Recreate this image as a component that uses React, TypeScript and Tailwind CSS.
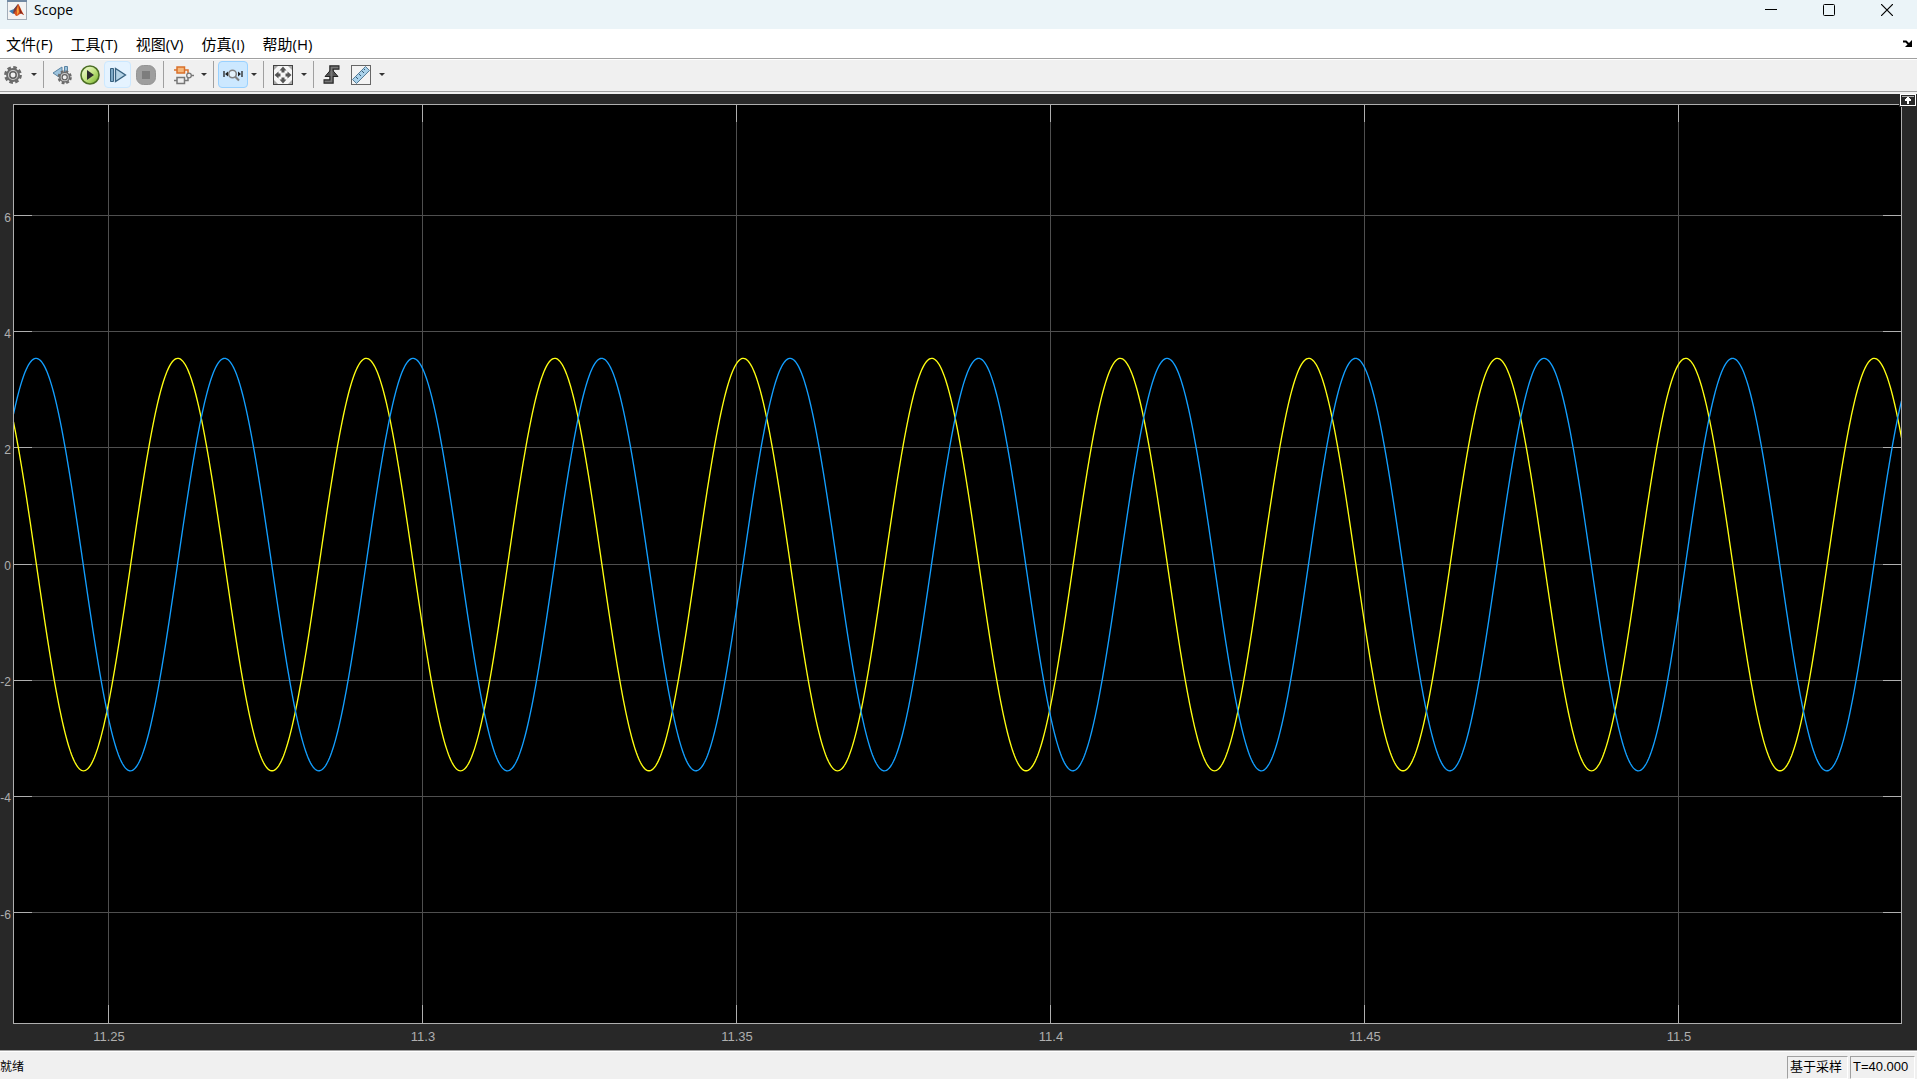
import { useLayoutEffect, useRef, useState, type ReactNode } from 'react';

const MENUS = ['文件(F)', '工具(T)', '视图(V)', '仿真(I)', '帮助(H)'];

const X_MIN = 11.23487;
const X_MAX = 11.53551;
const Y_MAX = 7.92;
const Y_MIN = -7.9;
const X_TICKS = [11.25, 11.3, 11.35, 11.4, 11.45, 11.5];
const Y_TICKS = [6, 4, 2, 0, -2, -4, -6];
const PERIOD = 0.030016;
const AMPLITUDE = 3.55;
const TRACES = [
  { name: 'a', color: '#ffff11', peak: 11.26103 },
  { name: 'b', color: '#139fff', peak: 11.23847 },
];

const MARGIN = { left: 13, right: 15, top: 10, bottom: 26 };
const TICK = 18;

function Scope(): JSX.Element {
  const ref = useRef<HTMLDivElement>(null);
  const [size, setSize] = useState({ width: 0, height: 0 });

  useLayoutEffect(() => {
    const el = ref.current;
    if (!el) return;
    const measure = () => setSize({ width: el.clientWidth, height: el.clientHeight });
    measure();
    const observer = new ResizeObserver(measure);
    observer.observe(el);
    return () => observer.disconnect();
  }, []);

  const left = MARGIN.left;
  const right = size.width - MARGIN.right - 1;
  const top = MARGIN.top;
  const bottom = size.height - MARGIN.bottom - 1;
  const sx = (v: number) => left + ((v - X_MIN) / (X_MAX - X_MIN)) * (right - left);
  const sy = (v: number) => top + ((Y_MAX - v) / (Y_MAX - Y_MIN)) * (bottom - top);

  const tracePath = (peak: number) => {
    const points: string[] = [];
    for (let px = left; px <= right; px += 1) {
      const t = X_MIN + ((px - left) / (right - left)) * (X_MAX - X_MIN);
      const v = AMPLITUDE * Math.cos((2 * Math.PI * (t - peak)) / PERIOD);
      points.push(`${px + 0.5},${(sy(v) + 0.5).toFixed(2)}`);
    }
    return points.join(' ');
  };

  return (
    <main ref={ref} className="relative min-h-0 flex-1 overflow-hidden bg-[#282828]">
      {size.width > 0 && (
        <svg width={size.width} height={size.height} className="absolute inset-0 block" role="img" aria-label="Scope">
          <rect x={left} y={top} width={right - left} height={bottom - top} fill="#000" />
          <g shapeRendering="crispEdges" fill="none">
            {X_TICKS.map((v) => {
              const x = Math.round(sx(v)) + 0.5;
              return (
                <g key={v}>
                  <path d={`M${x} ${top}V${bottom}`} stroke="#4f4f4f" />
                  <path d={`M${x} ${top}v${TICK}M${x} ${bottom}v${-TICK}`} stroke="#afafaf" />
                </g>
              );
            })}
            {Y_TICKS.map((v) => {
              const y = Math.floor(sy(v)) + 0.5;
              return (
                <g key={v}>
                  <path d={`M${left} ${y}H${right}`} stroke="#4f4f4f" />
                  <path d={`M${left} ${y}h${TICK + 1}M${right} ${y}h${-TICK}`} stroke="#afafaf" />
                </g>
              );
            })}
          </g>
          {TRACES.map((t) => (
            <polyline key={t.name} points={tracePath(t.peak)} fill="none" stroke={t.color} strokeWidth="1.35" />
          ))}
          <rect
            x={left + 0.5}
            y={top + 0.5}
            width={right - left}
            height={bottom - top}
            fill="none"
            stroke="#afafaf"
            shapeRendering="crispEdges"
          />
          <g fill="#afafaf" fontFamily="'Liberation Sans', Arial, sans-serif">
            {X_TICKS.map((v) => (
              <text key={v} x={sx(v) + 1} y={bottom + 18} fontSize="13" textAnchor="middle">
                {v}
              </text>
            ))}
            {Y_TICKS.map((v) => (
              <text key={v} x={left - 2} y={sy(v) + 6} fontSize="12" textAnchor="end">
                {v}
              </text>
            ))}
          </g>
        </svg>
      )}
      <button type="button" aria-label="Maximize axes" className="absolute top-0 right-0 block">
        <svg width="18" height="13" viewBox="0 0 18 13" shapeRendering="crispEdges">
          <rect width="18" height="13" fill="#282828" />
          <rect x="1.5" y="0.5" width="15" height="11" fill="#282828" stroke="#fff" />
          <path d="M3 2h12v1H3z" fill="#afafaf" />
          <path d="M8 3h2v1h1v1h1v2h-2v3H8V7H6V5h1V4h1z" fill="#fff" />
        </svg>
      </button>
    </main>
  );
}

function MatlabLogo(): JSX.Element {
  return (
    <svg width="20" height="20" viewBox="0 0 20 20">
      <rect x="0.5" y="0.5" width="19" height="19" fill="#f3f3f3" stroke="#a3adb8" />
      <path d="M0 0h20v2H0z" fill="#7189a3" />
      <path d="M2 11l5-2 4-5-3 9-2 1z" fill="#3b7fb5" />
      <path d="M7 9l4-5 1 1-4 9-2-1z" fill="#7a3b3a" />
      <path d="M11 4c2 2 4 8 6 11-2-1-3-2-4-1-2 1-2 2-4 2L7 13c2-1 3-6 4-9z" fill="#d9531e" />
      <path d="M12 5c1 3 2 7 5 10-2-1-3-2-4-1z" fill="#8e2517" />
      <path d="M10 9l1-3 1 6-2 3z" fill="#f5a13a" />
    </svg>
  );
}

function GearIcon({ x = 0, y = 0, scale = 1 }: { x?: number; y?: number; scale?: number }): JSX.Element {
  return (
    <g transform={`translate(${x} ${y}) scale(${scale})`}>
      <circle cx="9" cy="9" r="7.6" fill="none" stroke="#6b6b6b" strokeWidth="2.6" strokeDasharray="3.6 2.37" />
      <circle cx="9" cy="9" r="6" fill="#cdcdcd" stroke="#6b6b6b" strokeWidth="1.8" />
      <circle cx="9" cy="9" r="3.2" fill="#efefef" stroke="#5f5f5f" strokeWidth="1.5" />
    </g>
  );
}

function Settings(): JSX.Element {
  return (
    <svg width="18" height="18" viewBox="0 0 18 18">
      <GearIcon />
    </svg>
  );
}

function StepBack(): JSX.Element {
  return (
    <svg width="20" height="20" viewBox="0 0 20 20">
      <path d="M10 2v12L1 8z" fill="#9cc3dd" stroke="#5b84a3" />
      <path d="M12.500 1.500h3v11h-3z" fill="#9cc3dd" stroke="#5b84a3" />
      <GearIcon x={5.5} y={5} scale={0.8} />
    </svg>
  );
}

function Run(): JSX.Element {
  return (
    <svg width="20" height="20" viewBox="0 0 20 20">
      <defs>
        <linearGradient id="run" x1="0" y1="0" x2="1" y2="1">
          <stop offset="0" stopColor="#f8fde4" />
          <stop offset="0.5" stopColor="#c5e585" />
          <stop offset="1" stopColor="#6fae22" />
        </linearGradient>
      </defs>
      <circle cx="10" cy="10" r="9" fill="url(#run)" stroke="#4c6f25" strokeWidth="1.6" />
      <path d="M7 5v10l7-5z" fill="#2c2c2c" />
    </svg>
  );
}

function StepForward(): JSX.Element {
  return (
    <svg width="18" height="18" viewBox="0 0 18 18">
      <path d="M1.500 2.500h3v13h-3z" fill="#7fa9c6" stroke="#38617f" />
      <path d="M6.500 2.500v13l10-6.500z" fill="#b5d3e6" stroke="#38617f" strokeWidth="1.300" />
    </svg>
  );
}

function Stop(): JSX.Element {
  return (
    <svg width="20" height="20" viewBox="0 0 20 20">
      <rect x="0.500" y="0.500" width="19" height="19" rx="7" fill="#9e9e9e" stroke="#949494" />
      <path d="M6 6h8v8H6z" fill="#7d7d7d" />
    </svg>
  );
}

function Blocks(): JSX.Element {
  return (
    <svg width="20" height="20" viewBox="0 0 20 20" fill="none">
      <path d="M0 5h3M10 5h4v4" stroke="#d9702a" strokeWidth="1.500" />
      <path d="M0 15.500h3M10 15.500h4v-4M17 10.500h3" stroke="#777" strokeWidth="1.500" />
      <path d="M3 2h7.500v6H3z" fill="#f6b87c" stroke="#d9702a" strokeWidth="1.500" />
      <path d="M3 12.500h7.500v6H3z" fill="#eee" stroke="#777" strokeWidth="1.500" />
      <circle cx="15" cy="10.500" r="2.300" fill="#eee" stroke="#777" strokeWidth="1.300" />
    </svg>
  );
}

function ZoomX(): JSX.Element {
  return (
    <svg width="20" height="16" viewBox="0 0 20 16">
      <path d="M1 4v6M19 4v6" stroke="#222" strokeWidth="1.300" />
      <path d="M2 7l3-2.500v5zM18 7l-3-2.500v5z" fill="#222" />
      <path d="M12 9.500l4 4" stroke="#808080" strokeWidth="2.200" />
      <circle cx="9.500" cy="7" r="3.800" fill="#e4f1fa" stroke="#808080" strokeWidth="1.500" />
    </svg>
  );
}

function FitView(): JSX.Element {
  return (
    <svg width="20" height="20" viewBox="0 0 20 20">
      <rect x="0.500" y="0.500" width="19" height="19" fill="#f6f6f6" stroke="#444" />
      <path d="M1 1h4L1 5zM19 1h-4l4 4zM1 19h4l-4-4zM19 19h-4l4-4z" fill="#aaa" />
      <path d="M10 1.500l3.500 4h-2v2h-3v-2h-2zM10 18.500l3.500-4h-2v-2h-3v2h-2zM1.500 10l4-3.500v2h2v3h-2v2zM18.500 10l-4-3.500v2h-2v3h2v2z" fill="#555" />
    </svg>
  );
}

function Trigger(): JSX.Element {
  return (
    <svg width="17" height="20" viewBox="0 0 17 20">
      <path d="M16.500 2.500H8.500V16.500H0.500" fill="none" stroke="#222" strokeWidth="4.500" />
      <path d="M8.500 4l6.500 7.500h-13z" fill="#555" stroke="#222" />
      <path d="M15.500 2.500H8.500V16.500H1.500" fill="none" stroke="#777" strokeWidth="2" />
    </svg>
  );
}

function Measure(): JSX.Element {
  return (
    <svg width="20" height="20" viewBox="0 0 20 20">
      <rect x="0.500" y="0.500" width="19" height="19" fill="#f3f3f3" stroke="#666" />
      <path d="M1.500 14.500L14.500 1.500l4 4L5.500 18.500z" fill="#a9d1ea" stroke="#557d98" />
      <path d="M5 12l2 2M8 9l2 2M11 6l2 2M13 4l1 1" stroke="#345a75" />
    </svg>
  );
}

function Tool({ label, className = '', children }: { label: string; className?: string; children: ReactNode }): JSX.Element {
  return (
    <button type="button" aria-label={label} className={`flex h-[27px] shrink-0 items-center justify-center ${className}`}>
      {children}
    </button>
  );
}

function Caret({ label }: { label: string }): JSX.Element {
  return (
    <Tool label={label} className="w-3">
      <svg width="6" height="3" viewBox="0 0 6 3">
        <path d="M0 0h6L3 3z" fill="#333" />
      </svg>
    </Tool>
  );
}

function Separator(): JSX.Element {
  return <div className="h-[27px] w-px shrink-0 bg-[#a0a0a0]" />;
}

export default function App(): JSX.Element {
  return (
    <div className="flex h-screen flex-col overflow-hidden bg-[#f0f0f0] font-['Open_Sans','Noto_Sans_CJK_SC',sans-serif] text-black">
      <header className="flex h-[29px] shrink-0 items-start justify-between bg-[#ebf4f8]">
        <div className="flex h-5 items-center gap-[7px] pl-[7px]">
          <MatlabLogo />
          <h1 className="text-[14px] leading-5">Scope</h1>
        </div>
        <div className="flex h-5 pr-px">
          <button type="button" aria-label="Minimize" className="flex w-[58px] items-center justify-center">
            <svg width="12" height="12" viewBox="0 0 12 12" stroke="#000">
              <path d="M0 5.500h12" />
            </svg>
          </button>
          <button type="button" aria-label="Maximize" className="flex w-[58px] items-center justify-center">
            <svg width="12" height="12" viewBox="0 0 12 12" fill="none" stroke="#000">
              <rect x="0.500" y="0.500" width="11" height="11" rx="1" />
            </svg>
          </button>
          <button type="button" aria-label="Close" className="flex w-[58px] items-center justify-center">
            <svg width="12" height="12" viewBox="0 0 12 12" stroke="#000" strokeWidth="1.200">
              <path d="M0 0l12 12M12 0L0 12" />
            </svg>
          </button>
        </div>
      </header>

      <nav className="flex h-[30px] shrink-0 items-center justify-between border-b border-[#a0a0a0] bg-white pr-1 pl-[6px]">
        <div className="flex gap-[18px]">
          {MENUS.map((m) => (
            <button key={m} type="button" className="text-[15px] leading-5">
              {m}
            </button>
          ))}
        </div>
        <button type="button" aria-label="Dock">
          <svg width="10" height="8" viewBox="0 0 10 8">
            <path d="M0 1.500h3l3 3" fill="none" stroke="#000" strokeWidth="2" />
            <path d="M9 0v7H2z" fill="#000" />
          </svg>
        </button>
      </nav>

      <div className="flex h-[33px] shrink-0 items-start border-t border-b border-t-white border-b-[#a0a0a0] bg-[#f0f0f0] pt-px">
        <div className="flex gap-[6px] pr-[3px] pl-1">
          <Tool label="Configuration" className="w-[18px]"><Settings /></Tool>
          <Caret label="Configuration options" />
        </div>
        <Separator />
        <div className="flex pr-[2px] pl-1">
          <Tool label="Step back" className="w-[28px]"><StepBack /></Tool>
          <Tool label="Run" className="w-[28px]"><Run /></Tool>
          <Tool label="Step forward" className="w-[27px] rounded-sm border border-[#cce8ff] bg-[#e5f3ff]"><StepForward /></Tool>
          <Tool label="Stop" className="w-[30px]"><Stop /></Tool>
        </div>
        <Separator />
        <div className="flex pr-[3px] pl-[6px]">
          <Tool label="Highlight block" className="w-[28px]"><Blocks /></Tool>
          <Caret label="Highlight options" />
        </div>
        <Separator />
        <div className="flex pr-[3px] pl-1">
          <Tool label="Zoom X" className="w-[30px] rounded-sm border border-[#99d1ff] bg-[#cce8ff]"><ZoomX /></Tool>
          <Caret label="Zoom options" />
        </div>
        <Separator />
        <div className="flex pr-[3px] pl-1">
          <Tool label="Scale axes" className="w-[30px]"><FitView /></Tool>
          <Caret label="Scale options" />
        </div>
        <Separator />
        <div className="flex pl-1">
          <Tool label="Triggers" className="w-[27px]"><Trigger /></Tool>
          <Tool label="Measurements" className="w-[31px]"><Measure /></Tool>
          <Caret label="Measurement options" />
        </div>
      </div>
      <div className="h-[2px] shrink-0 bg-[#f0f0f0]" />

      <Scope />

      <footer className="flex h-[29px] shrink-0 items-end justify-between border-t border-[#a0a0a0] bg-[#f0f0f0] font-['Liberation_Sans','Noto_Sans_CJK_SC',sans-serif] text-[13px] shadow-[inset_0_1px_0_#fff]">
        <span className="text-[12px] leading-[24px]">就绪</span>
        <div className="flex gap-[2px] pr-[2px]">
          <span className="h-[23px] w-[61px] border border-t-[#a0a0a0] border-r-white border-b-white border-l-[#a0a0a0] pl-[2px] leading-[19px] whitespace-nowrap">
            基于采样
          </span>
          <span className="h-[23px] w-[65px] border border-t-[#a0a0a0] border-r-white border-b-white border-l-[#a0a0a0] pl-[2px] leading-[19px] whitespace-nowrap">
            T=40.000
          </span>
        </div>
      </footer>
    </div>
  );
}
